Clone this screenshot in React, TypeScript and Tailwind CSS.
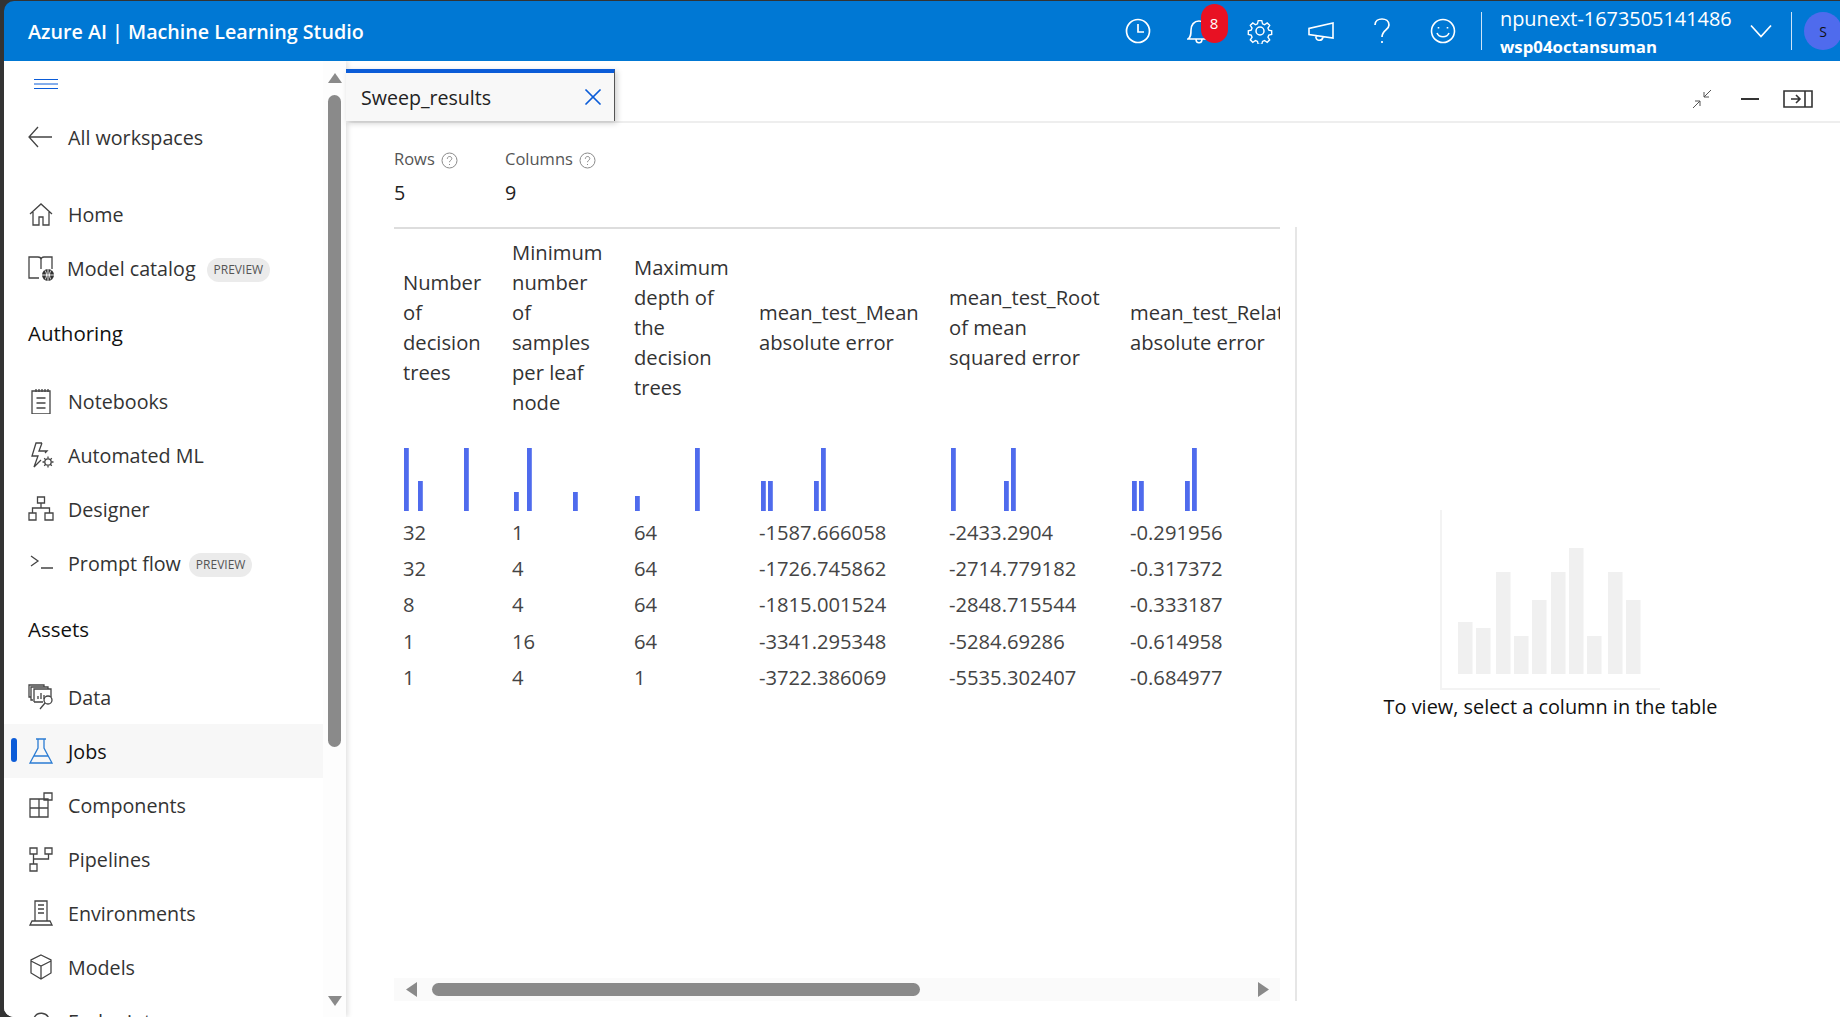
import React from "react";
import { X } from "lucide-react";

type P = { children: React.ReactNode; size?: number; className?: string; sw?: number };
const Ic = ({ children, size = 26, className = "", sw = 1.3 }: P) => (
  <svg width={size} height={size} viewBox="0 0 26 26" fill="none" stroke="currentColor" strokeWidth={sw} className={"shrink-0 " + className}>
    {children}
  </svg>
);

const icons: Record<string, React.ReactNode> = {
  back: <path d="M24 13H1M10 3 1 13l9 10" />,
  home: <path d="M2 13 13 3l11 10M5 11v13h6v-8h4v8h6V11" />,
  catalog: (
    <>
      <path d="M11 23H1V2h9c2 0 3 1 3 2.500V14M13 4.500C13 3 14 2 16 2h8v12" />
      <circle cx="20" cy="20" r="6" fill="#333" stroke="none" />
      <path d="M14 20h12M20 14v12M17 15.500c2 3 2 6 0 9M23 15.500c-2 3-2 6 0 9" stroke="#fff" strokeWidth="0.9" />
    </>
  ),
  notebook: <path d="M4 3h18v23H4zM8 1v3M11 1v3M14 1v3M17 1v3M20 1v3M8.500 10h9M8.500 15h9M8.500 20h9" />,
  auto: (
    <>
      <path d="M14 1H8L4 14h6L6 25l7-7M14 1l-3 8h8l-2 2" />
      <circle cx="20" cy="20" r="3.200" />
      <path d="M20 14.500v2M20 23.500v2M14.500 20h2M23.500 20h2M16.200 16.200l1.400 1.400M22.400 22.400l1.400 1.400M16.200 23.800l1.400-1.400M22.400 17.600l1.400-1.400" />
    </>
  ),
  designer: <path d="M9.500 1h7v6h-7zM1 17h7v7H1zM17 17h8v7h-8zM13 7v5M4.500 17v-5h17v5" />,
  prompt: <path d="m3 6 7 5-7 5M13 18h12" />,
  data: (
    <>
      <path d="M3 13H1V1h15v2M5 16H3V3h17v2M6 18V5h17v8M6 18h9" />
      <path d="M10 15v-3M13 15V9M16 15v-4" />
      <circle cx="20" cy="16" r="4" />
      <path d="m17 19-5 6" />
    </>
  ),
  jobs: <path d="M8 1h10M10 1v9L2 25h22l-8-15V1M6 18h14" />,
  components: <path d="M2 6h18v18H2zM11 6v18M2 15h18M16 0h8v7h-8z" transform="translate(0 1)" />,
  pipelines: <path d="M2 2h7v6H2zM17 2h7v6h-7zM2 18h7v7H2zM5.500 8v10M20.500 8v5h-15" />,
  env: <path d="M7 1h12v20H7zM4 21h18l2 4H2zM10 9h6M10 13h6M10 5h6" />,
  models: <path d="m13 1 10 5v13l-10 6-10-6V6zM3 7l10 5 10-5M13 12v13" />,
  cloud: <path d="M7 22a6 6 0 0 1-1-12 8 8 0 0 1 15 1 5.500 5.500 0 0 1 0 11z" />,
};

const NavItem = ({ icon, label, badge, active, tight }: { icon: string; label: string; badge?: boolean; active?: boolean; tight?: boolean }) => (
  <div className={"relative flex h-[54px] items-center pl-6 " + (active ? "bg-[#f7f7f7] text-[#111]" : "text-[#333]")}>
    {active && <div className="absolute left-[7px] top-[14px] h-[24px] w-[6px] rounded-full bg-[#0b5cd8]" />}
    <Ic className={active ? "text-[#2b7cd3]" : "text-[#444]"}>{icons[icon]}</Ic>
    <span className={(tight ? "ml-[13px]" : "ml-[14px]") + " whitespace-nowrap pt-[2px] text-[19.700px]"}>{label}</span>
    {badge && <span className={(tight ? "ml-[11px]" : "ml-2") + " mt-[3px] rounded-full bg-[#ebebeb] px-[7px] py-[2px] text-[12px] leading-[20px] text-[#555]"}>PREVIEW</span>}
  </div>
);

const Heading = ({ children, className = "" }: { children: React.ReactNode; className?: string }) => (
  <div className={"flex h-[54px] items-center pl-6 pt-[2px] text-[20.500px] font-medium text-[#111] " + className}>{children}</div>
);

const Tri = ({ dir, className = "" }: { dir: "u" | "d" | "l" | "r"; className?: string }) => {
  const pts = { u: "7,0 14,10 0,10", d: "0,0 14,0 7,10", l: "0,7.500 11,0 11,15", r: "0,0 11,7.500 0,15" }[dir];
  const vertical = dir === "u" || dir === "d";
  return (
    <svg width={vertical ? 14 : 11} height={vertical ? 10 : 15} className={"shrink-0 " + className}>
      <polygon points={pts} fill="#8a8a8a" />
    </svg>
  );
};

const columns = [
  { w: 109, lines: ["Number", "of", "decision", "trees"], bars: [[1, 63], [15, 30], [61, 63]], vals: ["32", "32", "8", "1", "1"] },
  { w: 122, lines: ["Minimum", "number", "of", "samples", "per leaf", "node"], bars: [[2, 19], [15, 63], [61, 19]], vals: ["1", "4", "4", "16", "4"] },
  { w: 125, lines: ["Maximum", "depth of", "the", "decision", "trees"], bars: [[1, 15], [61, 63]], vals: ["64", "64", "64", "64", "1"] },
  { w: 190, lines: ["mean_test_Mean", "absolute error"], bars: [[2, 30], [9, 30], [55, 30], [62, 63]], vals: ["-1587.666058", "-1726.745862", "-1815.001524", "-3341.295348", "-3722.386069"] },
  { w: 181, lines: ["mean_test_Root", "of mean", "squared error"], bars: [[2, 63], [55, 30], [62, 63]], vals: ["-2433.2904", "-2714.779182", "-2848.715544", "-5284.69286", "-5535.302407"] },
  { w: 170, lines: ["mean_test_Relative", "absolute error"], bars: [[2, 30], [9, 30], [55, 30], [62, 63]], vals: ["-0.291956", "-0.317372", "-0.333187", "-0.614958", "-0.684977"] },
];

const emptyBars = [
  [1458, 621], [1476, 627], [1496, 571], [1514, 635], [1532, 599],
  [1551, 571], [1569, 547], [1587, 635], [1608, 571], [1626, 599],
];

const Help = () => (
  <svg width="17" height="17" viewBox="0 0 17 17" fill="none" stroke="#8a8a8a" strokeWidth="1" className="ml-[6px] mt-[2px]">
    <circle cx="8.500" cy="8.500" r="7.500" />
    <path d="M6.300 6.800c0-3 4.500-3 4.500-.2 0 1.700-2.300 1.700-2.300 3.600M8.500 12v1" />
  </svg>
);

export default function App() {
  return (
    <div className="flex h-[1017px] w-[1840px] flex-col overflow-hidden bg-[#333333] pl-1 pt-px font-['Open_Sans','Noto_Sans',sans-serif]">
      <header className="flex h-[60px] shrink-0 items-center overflow-hidden rounded-tl-[10px] bg-[#0078d4] pl-6 text-white">
        <div className="whitespace-nowrap pt-[2px] text-[19.700px] font-semibold">Azure AI | Machine Learning Studio</div>
        <div className="flex-1" />
        <div className="flex shrink-0 items-center">
          {[
            <svg key="c" width="26" height="26" viewBox="0 0 26 26" fill="none" stroke="#fff" strokeWidth="1.700"><circle cx="13" cy="13" r="11.500" /><path d="M13 6v8h6" /></svg>,
            <div key="b" className="relative flex h-[60px] w-[26px] items-center justify-center">
              <svg width="24" height="26" viewBox="0 0 24 26" fill="none" stroke="#fff" strokeWidth="1.600"><path d="M1 21c3-2 3-5 3-9 0-5 3-9 8-9s8 4 8 9c0 4 0 7 3 9zM9 21c0 5 6 5 6 0" /></svg>
              <div className="absolute left-[15px] top-[3px] flex h-[39px] w-[27px] items-center justify-center rounded-full bg-[#e81123] text-[15px]">8</div>
            </div>,
            <svg key="g" width="26" height="26" viewBox="0 0 26 26" fill="none" stroke="#fff" strokeWidth="1.500"><circle cx="13" cy="13" r="4" /><path d="m11 1.500h4l.8 3.500 2.200 1 3-2 2.800 2.800-2 3 1 2.200 3.200.8v4l-3.200.8-1 2.200 2 3-2.800 2.800-3-2-2.200 1-.8 3.200h-4l-.8-3.200-2.200-1-3 2-2.800-2.800 2-3-1-2.200-3.200-.8v-4l3.200-.8 1-2.200-2-3 2.800-2.800 3 2 2.200-1z" transform="translate(1.300 1.300) scale(.9)" /></svg>,
            <svg key="m" width="26" height="26" viewBox="0 0 26 26" fill="none" stroke="#fff" strokeWidth="1.600"><path d="M1 10.500v6l24 3.500V5zM8 18c-1 5 6 6 7 1" /></svg>,
            <svg key="h" width="20" height="28" viewBox="0 0 20 28" fill="none" stroke="#fff" strokeWidth="1.700"><path d="M3 8c0-8 14-8 14 0 0 5-7 5-7 12M10 24v2" /></svg>,
            <svg key="s" width="26" height="26" viewBox="0 0 26 26" fill="none" stroke="#fff" strokeWidth="1.600"><circle cx="13" cy="13" r="11.500" /><path d="M7 15c2 5 10 5 12 0M8.500 9v1.500M17.500 9v1.500" /></svg>,
          ].map((el, i) => (
            <div key={i} className="flex h-[60px] w-[61px] items-center justify-center">{el}</div>
          ))}
          <div className="ml-2 h-[38px] w-px bg-[#cfe4f7]" />
          <div className="w-[263px] pl-[18px] leading-none">
            <div className="whitespace-nowrap text-[19.900px] leading-[31px]">npunext-1673505141486</div>
            <div className="whitespace-nowrap text-[16.800px] font-bold leading-[25px]">wsp04octansuman</div>
          </div>
          <div className="flex w-[32px] justify-center">
            <svg width="22" height="14" viewBox="0 0 22 14" fill="none" stroke="#fff" strokeWidth="1.700"><path d="m1 1.500 10 11 10-11" /></svg>
          </div>
          <div className="ml-[14px] h-[38px] w-px bg-[#cfe4f7]" />
          <div className="ml-3 mr-[-2px] flex h-[38px] w-[38px] items-center justify-center rounded-full bg-[#4f6bed] text-[14px] text-[#111]">S</div>
        </div>
      </header>

      <div className="flex min-h-0 flex-1 overflow-hidden rounded-bl-[10px] bg-white">
        <aside className="flex w-[342px] shrink-0 overflow-hidden bg-[#fdfdfd] shadow-[2px_0_5px_rgba(0,0,0,0.12)]">
          <nav className="w-[319px] shrink-0 bg-white">
            <div className="flex h-[46px] items-center pl-[30px]">
              <svg width="24" height="12" viewBox="0 0 24 12" stroke="#0b5cd8" strokeWidth="1"><path d="M0 1.500h24M0 6h24M0 10.500h24" /></svg>
            </div>
            <div className="mt-[3px]"><NavItem icon="back" label="All workspaces" /></div>
            <div className="mt-[23px]">
              <NavItem icon="home" label="Home" />
              <NavItem icon="catalog" label="Model catalog" badge tight />
            </div>
            <Heading className="mt-[10px]">Authoring</Heading>
            <div className="mt-[15px]">
              <NavItem icon="notebook" label="Notebooks" />
              <NavItem icon="auto" label="Automated ML" />
              <NavItem icon="designer" label="Designer" />
              <NavItem icon="prompt" label="Prompt flow" badge />
            </div>
            <Heading className="mt-[11px]">Assets</Heading>
            <div className="mt-[15px]">
              <NavItem icon="data" label="Data" />
              <NavItem icon="jobs" label="Jobs" active />
              <NavItem icon="components" label="Components" />
              <NavItem icon="pipelines" label="Pipelines" />
              <NavItem icon="env" label="Environments" />
              <NavItem icon="models" label="Models" />
              <NavItem icon="cloud" label="Endpoints" />
            </div>
          </nav>
          <div className="flex h-[945px] w-[23px] flex-col items-start pl-[5px] pt-[12px]">
            <Tri dir="u" />
            <div className="mt-[12px] h-[652px] w-[13px] rounded-full bg-[#8a8a8a]" />
            <div className="flex-1" />
            <Tri dir="d" />
          </div>
        </aside>

        <main className="flex min-w-0 flex-1 flex-col">
          <div className="flex h-[62px] shrink-0 items-end border-b-2 border-[#eeeeee] pr-[27px]">
            <div className="flex h-[52px] w-[269px] items-center justify-between border-r border-t-4 border-r-[#555] border-t-[#0b5cd8] bg-[#f8f8f8] pl-[15px] pr-[7px] shadow-[2px_2px_6px_rgba(0,0,0,0.2)]">
              <span className="pt-[2px] text-[19.600px] text-[#222]">Sweep_results</span>
              <X size={28} strokeWidth={1.500} className="text-[#0b5cd8]" />
            </div>
            <div className="flex-1" />
            <div className="flex h-[60px] items-center pt-[16px] text-[#444]">
              <svg width="20" height="20" viewBox="0 0 20 20" fill="none" stroke="#555" strokeWidth="1"><path d="M1 19 8 12M3 12h5v5M19 1l-7 7M12 3v5h5" /></svg>
              <div className="ml-[29px] h-[2px] w-[18px] bg-[#333]" />
              <svg width="30" height="18" viewBox="0 0 30 18" fill="none" stroke="#333" strokeWidth="1.600" className="ml-[24px]"><path d="M1 1h28v16H1zM22 1v16M8 9h9M13 5l4 4-4 4" /></svg>
            </div>
          </div>

          <div className="shrink-0 pl-[48px] pt-[23px]">
            <div className="flex text-[#555]">
              <div className="w-[111px]">
                <div className="flex items-center text-[16.500px] leading-[26px]">Rows<Help /></div>
                <div className="mt-[7px] text-[19.700px] leading-[28px] text-[#222]">5</div>
              </div>
              <div>
                <div className="flex items-center text-[16.500px] leading-[26px]">Columns<Help /></div>
                <div className="mt-[7px] text-[19.700px] leading-[28px] text-[#222]">9</div>
              </div>
            </div>
          </div>

          <div className="mb-[16px] flex min-h-0 flex-1 pt-[20px]">
            <div className="ml-[48px] flex w-[903px] shrink-0 flex-col border-r-2 border-[#e6e6e6] pr-[15px]">
              <div className="min-h-0 flex-1 overflow-hidden border-t-2 border-[#dddddd]">
                <div className="flex pl-[9px]">
                  {columns.map((c) => (
                    <div key={c.lines[0]} className="shrink-0" style={{ width: c.w }}>
                      <div className="flex h-[196px] flex-col justify-center text-[20.200px] leading-[30px] text-[#333]">
                        {c.lines.map((l) => (
                          <div key={l} className="whitespace-nowrap">{l}</div>
                        ))}
                      </div>
                      <svg width="80" height="63" className="mt-[23px] block">
                        {c.bars.map(([x, h]) => (
                          <rect key={x} x={x} y={63 - h} width="4.800" height={h} fill="#4f6bed" />
                        ))}
                      </svg>
                      <div className="mt-[3px]">
                        {c.vals.map((v, i) => (
                          <div key={i} className="flex h-[36.200px] items-center whitespace-nowrap text-[20.200px] text-[#444]">{v}</div>
                        ))}
                      </div>
                    </div>
                  ))}
                </div>
              </div>
              <div className="flex h-[23px] shrink-0 items-center bg-[#fafafa] pl-[12px] pr-[11px]">
                <Tri dir="l" />
                <div className="ml-[15px] h-[13px] w-[488px] rounded-full bg-[#8a8a8a]" />
                <div className="flex-1" />
                <Tri dir="r" />
              </div>
            </div>
            <div className="flex flex-1 flex-col items-center pr-[36px] pt-[283px]">
              <svg width="220" height="180" viewBox="1440 509 220 180" className="mr-[1px]">
                <path d="M1441 509v179h219" fill="none" stroke="#f3f3f3" strokeWidth="2" />
                {emptyBars.map(([x, y]) => (
                  <rect key={x} x={x} y={y} width="14.500" height={673 - y} fill="#f0f0f0" />
                ))}
              </svg>
              <div className="mt-[2px] whitespace-nowrap text-[19.900px] leading-[30px] text-[#111]">To view, select a column in the table</div>
            </div>
          </div>
        </main>
      </div>
    </div>
  );
}
